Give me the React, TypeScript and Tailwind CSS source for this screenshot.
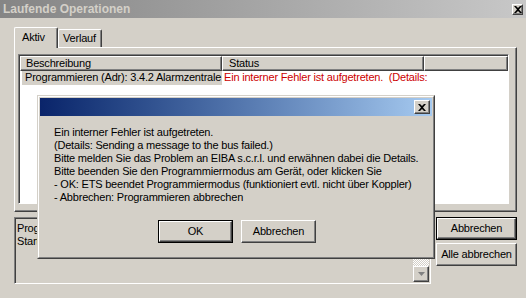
import { FC, ReactNode } from "react";

const raised =
  "border border-t-white border-l-white border-r-[#404040] border-b-[#404040] shadow-[inset_-1px_-1px_#808080]";
const sunken =
  "border border-t-[#808080] border-l-[#808080] border-r-white border-b-white shadow-[inset_1px_1px_#404040]";

const Button: FC<{ children: ReactNode; def?: boolean; className?: string }> = ({
  children,
  def,
  className = "",
}) => (
  <div className={`${def ? "border border-black" : ""} ${className} flex`}>
    <div className={`${raised} flex-1 flex items-center justify-center bg-[#d4d0c8] text-black`}>
      {children}
    </div>
  </div>
);

const CloseBox: FC<{ className?: string }> = ({ className = "" }) => (
  <div className={`${raised} ${className} bg-[#d4d0c8] flex items-center justify-center`}>
    <svg width="8" height="7" viewBox="0 0 8 7">
      <path d="M0 0h2l2 2 2-2h2L5 3.5 8 7H6L4 5 2 7H0l3-3.5z" fill="#000" />
    </svg>
  </div>
);

const lines = [
  "Ein interner Fehler ist aufgetreten.",
  "(Details: Sending a message to the bus failed.)",
  "Bitte melden Sie das Problem an EIBA s.c.r.l. und erwähnen dabei die Details.",
  "Bitte beenden Sie den Programmiermodus am Gerät, oder klicken Sie",
  "- OK: ETS beendet Programmiermodus (funktioniert evtl. nicht über Koppler)",
  "- Abbrechen: Programmieren abbrechen",
];

const ErrorDialog: FC = () => (
  <div className="absolute left-[37px] top-[95px] w-[398px] h-[164px] border border-t-[#d4d0c8] border-l-[#d4d0c8] border-r-[#404040] border-b-[#404040] bg-[#d4d0c8]">
    <div className="h-full border border-t-white border-l-white border-r-[#808080] border-b-[#808080] p-px flex flex-col">
      <div className="h-[18px] flex items-center justify-end pr-[2px] bg-gradient-to-r from-[#0a246a] to-[#a6caf0]">
        <CloseBox className="w-[16px] h-[14px]" />
      </div>
      <div className="pl-[14px] pt-[10px] leading-[13px] text-black">
        {lines.map((l) => (
          <div key={l} className="whitespace-nowrap">
            {l}
          </div>
        ))}
      </div>
      <div className="flex justify-center gap-[8px] mt-[16px] pl-[2px]">
        <Button def className="w-[75px] h-[23px]">OK</Button>
        <Button className="w-[75px] h-[23px]">Abbrechen</Button>
      </div>
    </div>
  </div>
);

const App: FC = () => {
  return (
    <div
      className="w-[526px] h-[298px] bg-[#d4d0c8] relative overflow-hidden flex flex-col text-[11px] leading-[13px] tracking-[-0.2px] text-black"
      style={{ fontFamily: '"Liberation Sans", Arial, sans-serif' }}
    >
      {/* title bar */}
      <div className="h-[18px] flex items-center pl-[3px] pr-[3px] bg-gradient-to-r from-[#858585] to-[#c8c8c8]">
        <span className="font-bold text-[#d4d0c8] text-[12px] tracking-normal">Laufende Operationen</span>
        <CloseBox className="ml-auto w-[11px] h-[11px]" />
      </div>

      {/* tabs */}
      <div className="flex items-end pl-[14px] pt-[9px] h-[29px]">
        <div className="relative z-10 -mb-px w-[44px] h-[21px] bg-[#d4d0c8] border-t border-l border-white border-r border-r-[#404040] rounded-t-[2px] shadow-[inset_-1px_0_#808080] pl-[7px] pt-[3px]">
          Aktiv
        </div>
        <div className="w-[44px] h-[18px] bg-[#d4d0c8] border-t border-l border-white border-r border-r-[#404040] rounded-t-[2px] shadow-[inset_-1px_0_#808080] pl-[4px] pt-[2px]">
          Verlauf
        </div>
      </div>

      {/* tab panel */}
      <div className="ml-[14px] w-[503px] h-[165px] border border-t-white border-l-white border-r-[#404040] border-b-[#404040] shadow-[inset_-1px_-1px_#808080] pt-[6px] pl-[3px]">
        <div className={`${sunken} w-[491px] h-[150px] bg-white flex flex-col`}>
          <div className="flex h-[15px] ml-px mt-px">
            <div className={`${raised} w-[202px] pl-[5px] bg-[#d4d0c8]`}>Beschreibung</div>
            <div className={`${raised} w-[202px] pl-[6px] bg-[#d4d0c8]`}>Status</div>
            <div className={`${raised} flex-1 bg-[#d4d0c8]`} />
          </div>
          <div className="flex h-[14px] ml-px">
            <div className="w-[200px] ml-[2px] pl-[3px] bg-[#d4d0c8] whitespace-nowrap overflow-hidden">
              Programmieren (Adr): 3.4.2 Alarmzentrale
            </div>
            <div className="pl-[2px] text-[#cc0000] whitespace-nowrap">
              Ein interner Fehler ist aufgetreten.&nbsp; (Details:
            </div>
          </div>
        </div>
      </div>

      {/* bottom row */}
      <div className="flex gap-[5px] mt-[5px] ml-[14px]">
        <div className={`${sunken} w-[417px] h-[67px] bg-[#d4d0c8] flex`}>
          <div className="flex-1 pl-[2px] pt-[4px] whitespace-nowrap overflow-hidden">
            <div>Programmierung</div>
            <div>Start</div>
          </div>
          <div className="w-[16px] mt-px mb-px mr-px flex flex-col">
            <div className={`${raised} h-[16px] bg-[#d4d0c8]`} />
            <div className="flex-1 bg-[repeating-conic-gradient(#d4d0c8_0_25%,#ffffff_0_50%)] bg-[length:2px_2px]" />
            <div className={`${raised} h-[16px] bg-[#d4d0c8] flex items-center justify-center`}>
              <svg width="7" height="4" viewBox="0 0 7 4">
                <path d="M0 0h7L3.5 4z" fill="#808080" />
              </svg>
            </div>
          </div>
        </div>
        <div className="flex flex-col gap-[3px]">
          <Button def className="w-[81px] h-[23px]">Abbrechen</Button>
          <Button className="w-[81px] h-[23px]">Alle abbrechen</Button>
        </div>
      </div>

      <ErrorDialog />
    </div>
  );
};

export default App;
